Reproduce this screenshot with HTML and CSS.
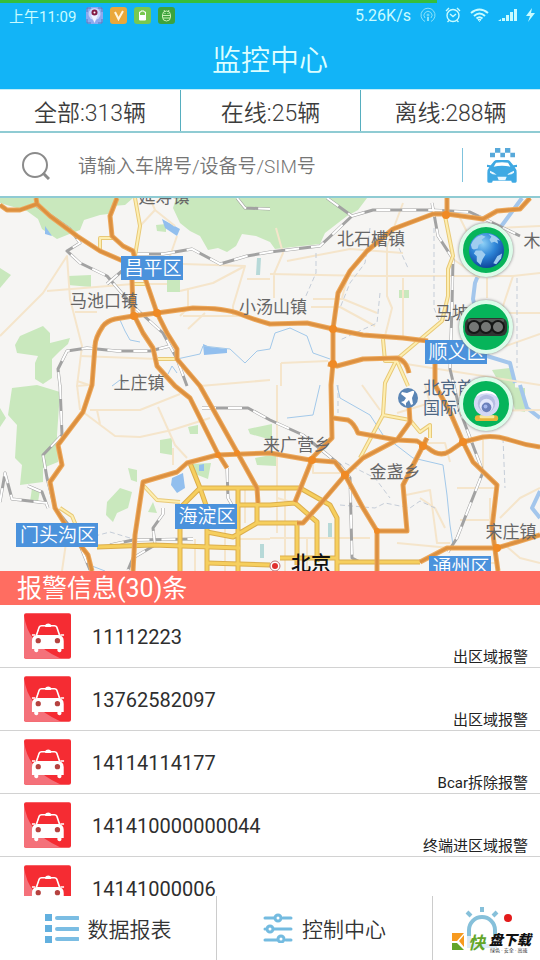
FILE: index.html
```html
<!DOCTYPE html>
<html lang="zh-CN">
<head>
    <meta charset="UTF-8">
    <meta name="viewport" content="width=device-width, initial-scale=1.0">
    <title>监控中心</title>
    <link rel="stylesheet" href="styles.css">
</head>
<body>
    <!-- Shared icons -->
    <svg class="defs" aria-hidden="true">
        <symbol id="taxi" viewBox="0 0 142 138">
            <rect width="142" height="138" rx="6" fill="#f52c33"/>
            <path d="M0 6Q6 50 30 80T112 138H6Q0 138 0 132Z" fill="#f4717a"/>
            <path d="M64 42V36Q66 31 73 31T82 36V42Z" fill="#fff"/>
            <path d="M37 68L46 42Q48 38 53 38H92Q97 38 99 42L108 68" fill="none" stroke="#fff" stroke-width="5"/>
            <path d="M24 84Q24 68 40 66H104Q120 68 120 84V108H113V114Q108 122 101 114V108H43V114Q38 122 31 114V108H24Z" fill="#fff"/>
            <path d="M42 66L49 44H95L102 66Z" fill="#f52c33"/>
            <path d="M24 66H34M110 66H121" stroke="#fff" stroke-width="5"/>
            <circle cx="43" cy="83" r="8" fill="#b5423f"/>
            <circle cx="101" cy="83" r="8" fill="#b5423f"/>
        </symbol>
    </svg>

    <div class="app">
        <!-- Status bar -->
        <div class="status-bar">
            <div class="progress"></div>
            <span class="clock">上午11:09</span>
            <div class="status-left">
                <svg viewBox="0 0 17 17"><rect width="17" height="17" rx="4" fill="#8fa9ef"/><path d="M1 5V1H5M12 1H16V5M1 12V16H5M16 12V16H12" fill="none" stroke="#5478bd"/><circle cx="8.500" cy="7" r="6" fill="#c9d6fb"/><path d="M5 8L8.500 16L12 8Z" fill="#eef3ff"/><circle cx="8.500" cy="5.500" r="3" fill="#841c45"/><circle cx="8.500" cy="5.500" r="1" fill="#fff"/></svg>
                <svg viewBox="0 0 17 17"><rect width="17" height="17" rx="3" fill="#eaa83a"/><path d="M5 5L8.500 12L13 4" fill="none" stroke="#fff4dc" stroke-width="2"/></svg>
                <svg viewBox="0 0 17 17"><rect width="17" height="17" rx="3" fill="#78c850"/><path d="M6 5H7V4H10V5H11.500V13H5.500V5Z" fill="none" stroke="#fff"/><rect x="6" y="8" width="5" height="5" fill="#fff"/></svg>
                <svg viewBox="0 0 17 17"><rect width="17" height="17" rx="3" fill="#3da33c"/><path d="M4.500 8A4 4 0 0 1 12.500 8V10A4 4 0 0 1 4.500 10ZM4 8.500H13M5 11H12M6 3L7 5M11 3L10 5M6.500 6.500H7.500M9.500 6.500H10.500" fill="none" stroke="#c9f2b4"/></svg>
            </div>
            <span class="speed">5.26K/s</span>
            <div class="status-right">
                <svg width="16" height="16" viewBox="0 0 16 16" fill="none" stroke="#8ce3fa"><path d="M5 14.500A7 7 0 1 1 11 14.500"/><path d="M5 11A4 4 0 1 1 11 11"/><circle cx="8" cy="8" r="1"/><path d="M8 10V14" stroke-width="2"/></svg>
                <svg width="16" height="16" viewBox="0 0 16 16" fill="none" stroke="#c8fbff" stroke-width="1.400"><circle cx="8" cy="8.500" r="6"/><path d="M5 7L8 9.500L11 7M1 4L4 1M15 4L12 1M4 13.500L2.500 15M12 13.500L13.500 15"/></svg>
                <svg width="19" height="16" viewBox="0 0 19 16" fill="none" stroke="#c8fbff" stroke-width="2"><path d="M1 6Q9.500 -1 18 6M4 9Q9.500 4 15 9M6.500 11.500Q9.500 9 12.500 11.500"/><path d="M8 12.500H11L9.500 14.500Z" stroke-width="1"/></svg>
                <svg width="19" height="14" viewBox="0 0 19 14" fill="#c8fbff"><path d="M0 13L3 11V13ZM4 10H7V13H4ZM8 7H11V13H8ZM12 4H15V13H12ZM16 1H19V13H16Z"/></svg>
                <svg width="9" height="14" viewBox="0 0 9 14" fill="#c8fbff"><path d="M6 0L0 8H4L2 14L9 5H5Z"/></svg>
            </div>
        </div>

        <header class="title-bar">
            <h1>监控中心</h1>
        </header>

        <!-- Vehicle counts -->
        <div class="counts">
            <button type="button">全部:313辆</button>
            <button type="button">在线:25辆</button>
            <button type="button">离线:288辆</button>
        </div>

        <form class="search">
            <label for="keyword" aria-label="搜索">
                <svg width="28" height="28" viewBox="0 0 28 28" fill="none" stroke="#8b8b8b" stroke-width="2"><circle cx="13" cy="13" r="12"/><path d="M21 21L27 27" stroke-width="3"/></svg>
            </label>
            <input type="text" id="keyword" placeholder="请输入车牌号/设备号/SIM号">
            <button type="button" class="vehicle-btn" aria-label="车辆">
                <svg width="32" height="35" viewBox="0 0 96 105">
                    <path d="M27 0H43V14H27ZM57 0H73V14H57ZM12 14H27V28H12ZM43 14H57V28H43ZM73 14H87V28H73Z" fill="#58a9da"/>
                    <path d="M14 52L24 40Q27 36 33 36H63Q69 36 72 40L82 52L93 50V57L86 58Q92 64 92 74V100Q92 104 88 104H80Q76 104 76 98H20Q20 104 16 104H8Q4 104 4 100V74Q4 64 10 58L3 57V50Z" fill="#3fa9e3"/>
                    <path d="M23 56L30 44Q48 41 66 44L73 56Q48 51 23 56Z" fill="#fff"/>
                    <path d="M12 68Q24 72 32 80Q18 80 12 74ZM84 68Q72 72 64 80Q78 80 84 74ZM34 86H62L58 97H38Z" fill="#e9f7ff"/>
                </svg>
            </button>
        </form>

        <!-- Map -->
        <div class="map">
            <svg class="map-canvas" viewBox="0 0 540 373" role="img" aria-label="北京地图">
                <rect width="540" height="373" fill="#f6f5f3"/>

                <!-- Parks and hills -->
                <g fill="#c9e8bd">
                    <path d="M0 0H133L125 7L112 8L108 16L100 17L84 22L80 32L72 35L57 41L42 31L38 21L27 13L0 5Z"/>
                    <path d="M176 0L173 10L180 25L190 33L200 38L208 52L218 50L227 54L236 48L242 36L256 38L270 44L275 51L320 46L325 35L347 18L358 12L367 0Z"/>
                    <path d="M0 70L11 77L0 90Z"/>
                    <path d="M68 78L91 77V89L68 87Z"/>
                    <path d="M167 78H180V94H167Z"/>
                    <path d="M156 27L166 26V34L157 33Z"/>
                    <path d="M15 147L20 138L43 128L50 135V145L70 140L68 146L60 153L52 161V180L43 186L35 181V165L38 158L17 155Z"/>
                    <path d="M12 190L37 187L60 194L57 237L58 264L43 270V284L20 287L22 267L15 260L17 227L8 217Z"/>
                    <path d="M0 210L6 220L0 229Z"/>
                    <path d="M107 304L120 290L132 294L128 310L117 315L113 324L106 317Z"/>
                    <path d="M128 270L137 272V284L131 282Z"/>
                    <path d="M160 242L172 240V257L160 255Z"/>
                    <path d="M188 229L198 227V236H190Z"/>
                    <path d="M248 231L272 226V242L250 236Z"/>
                    <path d="M255 260L276 256V268L257 267Z"/>
                    <path d="M192 266L211 265L208 281L195 276Z"/>
                    <path d="M148 314L153 304L157 315Z"/>
                    <path d="M32 290L40 292L38 304H30Z"/>
                    <path d="M399 92H409V100H399Z"/>
                    <path d="M492 172L510 170L515 182V200L505 195Z"/>
                    <path d="M508 189L525 190V214L515 212Z"/>
                </g>

                <!-- Water -->
                <g fill="#92bfee">
                    <path d="M162 21L180 31L177 38L165 30Z"/>
                    <path d="M172 280L183 275L185 290L177 295L171 287Z"/>
                    <path d="M203 146L210 149L227 151V155L204 157Z"/>
                    <path d="M45 28L52 38L45 36Z"/>
                    <path d="M199 267L204 266V273H199Z"/>
                </g>
                <g class="river">
                    <path d="M177 161L200 156L203 148L230 151L245 165L257 153L270 151L275 135L290 130L307 138L313 155L330 161"/>
                    <path d="M337 187L340 200L370 217L383 237L413 260L443 267L447 297L450 327L453 347"/>
                    <path d="M287 220L313 217L320 187M120 122L125 133L130 142L140 144"/>
                    <path d="M112 188L120 182L125 185M168 176L172 168L177 175M85 351L92 368L105 373"/>
                    <path d="M259 60L258 77M262 346V360M330 325V340" stroke="#b7d9d8" stroke-width="4"/>
                    <path class="wide" d="M522 0L500 30L483 65L475 85L473 101L487 158L510 165L515 185M520 187L527 210L540 220M540 293L532 310L540 320"/>
                </g>

                <!-- Local roads -->
                <g class="road local">
                    <path d="M0 138L23 115L43 95L67 58L70 101L82 148L77 188L88 187"/>
                    <path d="M47 93L133 86H167M183 66L245 68L233 108V118M180 93L213 85L245 68M247 81H270M188 90V110L180 118"/>
                    <path d="M75 114H97M80 158L158 161M188 131L205 115M183 118H240M200 188L270 182M77 183L92 188"/>
                    <path d="M140 28L155 12L150 0M140 28L136 56M177 38L170 58M155 12L175 28"/>
                    <path d="M270 76L370 78H513L540 75M276 30L283 55L274 76V100M287 63L350 51L403 55"/>
                    <path d="M403 5L387 48V98L392 110L385 138M313 101H343L377 115M311 109H340L375 128M350 70L342 100"/>
                    <path d="M455 115H540M487 80V100M513 78L503 108L510 125M470 145L500 150L540 136M281 165L328 163M281 165V188M387 163L540 187"/>
                    <path d="M403 80V138M453 61L480 80M460 20L470 40M500 30L540 28"/>
                    <path d="M90 212H140L180 196M83 214L115 238L140 239L172 232L210 220M158 209L175 247L187 260M173 250V267M77 187L80 212M97 212L100 226"/>
                    <path d="M277 187V335M270 340H370M307 340V373M277 300L295 305M313 262V275H340"/>
                    <path d="M362 187L380 212M406 297L430 292L437 345H450M420 300L435 310L445 330M457 290H495M460 322H492M483 239V270M490 300V330"/>
                    <path d="M500 320L520 300L540 290M505 347L520 360L540 365M415 245H445L450 264M397 215L430 205L425 187M460 213L540 212M62 373L66 345"/>
                    <path d="M195 341V373M225 311V373M240 341H270M245 290V325M285 290V373M397 345L450 350M458 365H498"/>
                </g>

                <!-- Dashed boundaries -->
                <g class="boundary">
                    <path d="M316 55V75L305 100M370 30L365 65L350 85L340 110M434 30V110L440 125M399 50L408 70M380 95L377 125L340 142M517 80V170"/>
                    <path d="M340 307L375 310L385 305L410 310L420 303L435 310M345 265L375 280L390 300M338 187V215M130 340L110 334L95 338M503 240L505 290"/>
                </g>

                <!-- Railways -->
                <g class="rail">
                    <path d="M37 8L70 31L80 45L67 53L80 65L107 78L133 108L163 135L177 161L187 188"/>
                    <path d="M107 86L122 73L128 63M135 56H163L192 51L220 66L247 58L270 54L320 48L352 18L373 12H430L470 14L520 38M327 0L352 18M237 0L245 10L270 11"/>
                    <path d="M60 188L58 171L67 153L87 150L117 153H150L170 148M60 187L62 237L43 257L47 280L55 310L75 335L90 372"/>
                    <path d="M0 304L5 275L12 301L47 305M28 288L42 294L48 310"/>
                    <path d="M202 210H248L270 222L303 237L340 267L350 280L352 360L360 364"/>
                    <path d="M227 270L228 300L232 307M163 310V316L153 330L155 347L133 360L128 372M110 347L133 342L193 341"/>
                    <path d="M432 5L438 38L453 61L452 108L450 171L460 213L483 274L457 340L448 354"/>
                </g>
                <g class="rail-gap">
                    <path d="M37 8L70 31L80 45L67 53L80 65L107 78L133 108L163 135L177 161L187 188"/>
                    <path d="M107 86L122 73L128 63M135 56H163L192 51L220 66L247 58L270 54L320 48L352 18L373 12H430L470 14L520 38M327 0L352 18M237 0L245 10L270 11"/>
                    <path d="M60 188L58 171L67 153L87 150L117 153H150L170 148M60 187L62 237L43 257L47 280L55 310L75 335L90 372"/>
                    <path d="M0 304L5 275L12 301L47 305M28 288L42 294L48 310"/>
                    <path d="M202 210H248L270 222L303 237L340 267L350 280L352 360L360 364"/>
                    <path d="M227 270L228 300L232 307M163 310V316L153 330L155 347L133 360L128 372M110 347L133 342L193 341"/>
                    <path d="M432 5L438 38L453 61L452 108L450 171L460 213L483 274L457 340L448 354"/>
                </g>

                <!-- Secondary roads -->
                <g class="road second-case">
                    <path d="M135 0L140 28L135 58M100 53V40H115M158 161H177M133 86H147M445 18L453 58L448 71V98L442 123L397 161L385 185L383 217L360 260M383 217L410 222L420 234L430 227V240M383 141L385 163H397L408 188M143 287L157 302L180 304M60 310L72 318L77 330"/>
                </g>
                <g class="road second-fill">
                    <path d="M135 0L140 28L135 58M100 53V40H115M158 161H177M133 86H147M445 18L453 58L448 71V98L442 123L397 161L385 185L383 217L360 260M383 217L410 222L420 234L430 227V240M383 141L385 163H397L408 188M143 287L157 302L180 304M60 310L72 318L77 330"/>
                </g>
                <g class="road ring-case">
                    <path d="M97 349L153 347L240 350M207 365L270 367M257 305V325M337 364H387L420 364M280 360H337"/>
                    <path d="M190 265L200 290H300L330 307L337 320V373M238 290V373M200 290L180 310V373M200 290L207 310V373M238 307H270L295 305L317 324V364M207 334L233 339L257 325H297V367"/>
                </g>
                <g class="road ring-fill">
                    <path d="M97 349L153 347L240 350M207 365L270 367M257 305V325M337 364H387L420 364M280 360H337"/>
                    <path d="M190 265L200 290H300L330 307L337 320V373M238 290V373M200 290L180 310V373M200 290L207 310V373M238 307H270L295 305L317 324V364M207 334L233 339L257 325H297V367"/>
                </g>

                <!-- Expressways -->
                <g class="road main-case">
                    <path d="M0 7L7 12H20L37 6L50 18L77 38L100 53L123 63L132 81L133 115L143 135L153 150L157 168L175 188L190 200L200 220L217 254L227 270M37 6L36 0"/>
                    <path d="M117 0L110 18L112 38L123 48L133 53L135 61L145 80L157 115L167 135L177 151V161L200 188L237 254L257 290L258 305"/>
                    <path d="M428 143L403 140L363 137L333 131L307 125L270 126Q255 122 240 116T193 110L157 115L133 118L115 121Q107 123 103 128Q95 140 95 148L92 187L83 214L58 247L62 267L50 284L55 310L70 334L88 357L92 373"/>
                    <path d="M530 0L520 11L497 13L483 21L447 16H433L393 31L367 53L350 73L338 95L333 131V165L331 187L332 240L313 259L295 304M447 0V18"/>
                    <path d="M328 166L337 168L363 161L397 160Q406 162 409 175M409 207L410 224L397 242L363 260L345 277L322 304L303 325H297"/>
                    <path d="M333 220L348 222Q354 225 358 235L397 242L417 243L428 250Q440 260 450 253L463 244L483 239Q495 237 510 242T540 249"/>
                    <path d="M435 166V187L450 214L463 244L473 264L497 287L492 330L498 373"/>
                    <path d="M133 373L135 337L143 284L177 274L187 265L217 257L270 255L310 262L335 264L345 277L363 310L377 333V373M377 333H407L403 287L427 240"/>
                    <path d="M420 364L447 350H497L517 344L540 337"/>
                </g>
                <g class="road main-fill">
                    <path d="M0 7L7 12H20L37 6L50 18L77 38L100 53L123 63L132 81L133 115L143 135L153 150L157 168L175 188L190 200L200 220L217 254L227 270M37 6L36 0"/>
                    <path d="M117 0L110 18L112 38L123 48L133 53L135 61L145 80L157 115L167 135L177 151V161L200 188L237 254L257 290L258 305"/>
                    <path d="M428 143L403 140L363 137L333 131L307 125L270 126Q255 122 240 116T193 110L157 115L133 118L115 121Q107 123 103 128Q95 140 95 148L92 187L83 214L58 247L62 267L50 284L55 310L70 334L88 357L92 373"/>
                    <path d="M530 0L520 11L497 13L483 21L447 16H433L393 31L367 53L350 73L338 95L333 131V165L331 187L332 240L313 259L295 304M447 0V18"/>
                    <path d="M328 166L337 168L363 161L397 160Q406 162 409 175M409 207L410 224L397 242L363 260L345 277L322 304L303 325H297"/>
                    <path d="M333 220L348 222Q354 225 358 235L397 242L417 243L428 250Q440 260 450 253L463 244L483 239Q495 237 510 242T540 249"/>
                    <path d="M435 166V187L450 214L463 244L473 264L497 287L492 330L498 373"/>
                    <path d="M133 373L135 337L143 284L177 274L187 265L217 257L270 255L310 262L335 264L345 277L363 310L377 333V373M377 333H407L403 287L427 240"/>
                    <path d="M420 364L447 350H497L517 344L540 337"/>
                </g>
                <g fill="#f08a24">
                    <circle cx="157" cy="115" r="4"/><circle cx="134" cy="118" r="4"/><circle cx="333" cy="131" r="4"/><circle cx="333" cy="166" r="4"/>
                    <circle cx="446" cy="17" r="4"/><circle cx="345" cy="277" r="4"/><circle cx="312" cy="262" r="4"/><circle cx="463" cy="244" r="4"/>
                    <circle cx="423" cy="248" r="4"/><circle cx="497" cy="350" r="4"/><circle cx="377" cy="333" r="3"/><circle cx="218" cy="257" r="3"/><circle cx="237" cy="255" r="3"/>
                </g>

                <!-- Towns -->
                <g class="town">
                    <text x="164" y="5">延寿镇</text>
                    <text x="371" y="47">北石槽镇</text>
                    <text x="104" y="109">马池口镇</text>
                    <text x="273" y="115">小汤山镇</text>
                    <text x="139" y="191">上庄镇</text>
                    <text x="452" y="121">马坡</text>
                    <text x="532" y="49">木</text>
                    <text x="297" y="253">来广营乡</text>
                    <text x="395" y="280">金盏乡</text>
                    <text x="511" y="340">宋庄镇</text>
                </g>
                <g class="airport">
                    <circle cx="408" cy="200" r="10" fill="#5a85b5"/>
                    <path d="M402 194L407 195L412 193Q415 192 414 195L412 200L413 206L411 207L409 202L406 205V208L404 206L401 204L404 203L406 200L401 196Z" fill="#fff"/>
                    <text x="423" y="196">北京首都</text>
                    <text x="423" y="216">国际机场</text>
                </g>

                <!-- Districts -->
                <g class="district-box">
                    <rect x="121" y="58" width="62" height="24"/>
                    <rect x="425" y="142" width="62" height="24"/>
                    <rect x="175" y="306" width="62" height="25"/>
                    <rect x="16" y="325" width="82" height="24"/>
                    <rect x="429" y="358" width="62" height="25"/>
                </g>
                <g class="district">
                    <text x="153" y="77">昌平区</text>
                    <text x="457" y="161">顺义区</text>
                    <text x="207" y="325">海淀区</text>
                    <text x="58" y="344">门头沟区</text>
                    <text x="461" y="376">通州区</text>
                </g>
                <circle cx="275" cy="368" r="5" fill="#fff" stroke="#b77"/>
                <circle cx="275" cy="368" r="3" fill="#e02f2f"/>
                <text class="capital" x="311" y="373">北京</text>
            </svg>

            <div class="map-tools">
                <button type="button" aria-label="卫星地图">
                    <svg viewBox="0 0 38 38">
                        <defs>
                            <radialGradient id="sea" cx=".4" cy=".3" r=".75"><stop offset="0" stop-color="#8dd0f6"/><stop offset=".5" stop-color="#2c83d6"/><stop offset="1" stop-color="#0b3c93"/></radialGradient>
                        </defs>
                        <circle cx="19" cy="19" r="18" fill="url(#sea)"/>
                        <g fill="#9fcdf0">
                            <path d="M3 13Q6 5 14 3L18 5L14 8L16 11L11 13L10 17L6 18L4 17Z"/>
                            <path d="M21 2Q29 3 33 9L30 8L31 12L27 10L24 11L22 8L24 5Z"/>
                            <path d="M8 19L14 19L18 23L15 28L13 34L9 30L9 25L6 22Z"/>
                            <path d="M30 25L35 22L34 27L29 33L26 32Z"/>
                        </g>
                    </svg>
                </button>
                <button type="button" aria-label="路况">
                    <svg class="traffic" viewBox="0 0 44 20">
                        <rect x="1" y="1" width="42" height="18" rx="6" fill="#303432"/>
                        <rect x="4" y="2" width="36" height="3" rx="1" fill="#555a57"/>
                        <g fill="#747775" stroke="#151716" stroke-width="2"><circle cx="10" cy="10" r="6"/><circle cx="22" cy="10" r="6"/><circle cx="34" cy="10" r="6"/></g>
                    </svg>
                </button>
                <button type="button" aria-label="街景">
                    <svg viewBox="0 0 38 38">
                        <rect x="7" y="30" width="24" height="6" rx="3" fill="#e5b43c"/>
                        <rect x="12" y="30" width="15" height="3" rx="1" fill="#f9e79a"/>
                        <circle cx="19" cy="18" r="13" fill="#d3d8f5"/>
                        <path d="M8 11A13 13 0 0 1 30 11Q19 4 8 11Z" fill="#fff"/>
                        <circle cx="19" cy="18" r="9" fill="#b4bde2"/>
                        <circle cx="19" cy="20" r="7" fill="#e4e8fb"/>
                        <circle cx="19" cy="22" r="5" fill="#6b80bb"/>
                        <circle cx="18" cy="21" r="2" fill="#a6b8ee"/>
                    </svg>
                </button>
            </div>
        </div>

        <!-- Alarms -->
        <h2 class="alarm-title">报警信息(30)条</h2>
        <ul class="alarm-list">
            <li>
                <svg class="taxi"><use href="#taxi"/></svg>
                <span class="device">11112223</span>
                <span class="reason">出区域报警</span>
            </li>
            <li>
                <svg class="taxi"><use href="#taxi"/></svg>
                <span class="device">13762582097</span>
                <span class="reason">出区域报警</span>
            </li>
            <li>
                <svg class="taxi"><use href="#taxi"/></svg>
                <span class="device">14114114177</span>
                <span class="reason">Bcar拆除报警</span>
            </li>
            <li>
                <svg class="taxi"><use href="#taxi"/></svg>
                <span class="device">141410000000044</span>
                <span class="reason">终端进区域报警</span>
            </li>
            <li>
                <svg class="taxi"><use href="#taxi"/></svg>
                <span class="device">14141000006</span>
            </li>
        </ul>

        <!-- Bottom menu -->
        <nav class="bottom-nav">
            <a href="#report">
                <svg width="34" height="30" viewBox="0 0 34 30"><path d="M0 1H7V8H0ZM0 12H7V19H0ZM0 23H7V30H0Z" fill="#62b0df"/><path d="M12 5H33M12 16H33M12 26H33" stroke="#7bbde3" stroke-width="4" stroke-linecap="round"/></svg>
                <span>数据报表</span>
            </a>
            <a href="#control">
                <svg width="30" height="30" viewBox="0 0 30 30" fill="none" stroke="#74bbe0" stroke-width="3" stroke-linecap="round"><path d="M2 5H11M20 5H28M2 16H2M11 16H28M2 27H14M23 27H28"/><g fill="#fff"><circle cx="15" cy="5" r="3"/><circle cx="7" cy="16" r="3"/><circle cx="18" cy="26" r="3"/></g></svg>
                <span>控制中心</span>
            </a>
            <a href="#alarm" aria-label="报警">
                <svg width="48" height="44" viewBox="0 0 48 44" fill="none" stroke="#86c0da" stroke-width="4"><path d="M4 30V24A13 13 0 0 1 30 24V30"/><path d="M2 6L6 10M17 1V6M32 6L28 10"/><path d="M4 30V40H30V30" stroke="#dceaf6"/><circle cx="43" cy="12" r="4" fill="#e31b1b" stroke="none"/></svg>
            </a>
            <div class="badge">
                <svg viewBox="0 0 86 22">
                    <path d="M1 1H13L6 9H1ZM13 3V15L8 9Z" fill="#f79a1f"/>
                    <path d="M1 11H6L13 18H1Z" fill="#63a52a"/>
                    <text class="brand" x="17" y="17">快</text>
                    <text class="brand-rest" x="38" y="13">盘下载</text>
                    <text class="slogan" x="39" y="20">绿色 · 安全 · 高速</text>
                </svg>
            </div>
        </nav>
    </div>
</body>
</html>
```
FILE: styles.css
```css
* {
    box-sizing: border-box;
}
body {
    margin: 0;
    font-family: Roboto, "Noto Sans CJK SC", sans-serif;
    color: #333;
    background: #fff;
}
button, input {
    font-family: inherit;
    border: none;
    background: none;
    padding: 0;
}
h1, h2, ul {
    margin: 0;
    padding: 0;
    font-weight: 350;
}
.defs {
    display: none;
}
.app {
    display: flex;
    flex-direction: column;
    height: 100vh;
}
.app > * {
    flex-shrink: 0;
}

/* Status bar */
.status-bar {
    position: relative;
    display: flex;
    align-items: center;
    height: 30px;
    padding: 0 5px 0 9px;
    font-size: 16px;
    color: #c8fbff;
    background: #12b4f7;
}
.progress {
    position: absolute;
    top: 0;
    left: 0;
    width: 81%;
    height: 3px;
    background: #36be3c;
}
.clock {
    font-size: 15px;
}
.status-left {
    display: flex;
    gap: 7px;
    margin-left: 10px;
}
.status-left svg {
    width: 17px;
    height: 17px;
}
.speed {
    margin-left: auto;
}
.status-right {
    display: flex;
    align-items: center;
    gap: 9px;
    margin-left: 9px;
}

.title-bar {
    display: flex;
    align-items: center;
    justify-content: center;
    height: 59px;
    padding-top: 2px;
    background: #12b4f7;
}
.title-bar h1 {
    font-size: 29px;
    line-height: 40px;
    color: #dcfeff;
}

/* Vehicle counts */
.counts {
    display: grid;
    grid-template-columns: repeat(3, 1fr);
    height: 44px;
    border-top: 1px solid #c4eef8;
    border-bottom: 2px solid #8fcbd3;
}
.counts button {
    font-size: 23px;
    font-weight: 350;
    color: #3c3c3c;
}
.counts button + button {
    border-left: 1px solid #56aebf;
}

/* Search */
.search {
    display: flex;
    align-items: center;
    height: 65px;
    padding: 0 22px;
    border-bottom: 2px solid #8fcbd3;
}
.search label {
    display: flex;
    padding-top: 3px;
}
.search input {
    flex: 1;
    min-width: 0;
    margin-left: 28px;
    padding-top: 3px;
    font-size: 19px;
    font-weight: 350;
    outline: none;
}
.search input::placeholder {
    color: #757575;
}
.vehicle-btn {
    display: flex;
    height: 34px;
    padding-left: 23px;
    border-left: 1px solid #7fc3dd;
}

/* Map */
.map {
    position: relative;
}
.map-canvas {
    display: block;
    width: 100%;
    height: auto;
}
.road, .river, .rail, .rail-gap, .boundary {
    fill: none;
    stroke-linejoin: round;
}
.river {
    stroke: #a3c9ea;
    stroke-width: 1;
}
.river .wide {
    stroke: #a3c6ec;
    stroke-width: 4;
}
.local {
    stroke: #f5e5cb;
    stroke-width: 2;
}
.boundary {
    stroke: #c5cdd8;
    stroke-width: 1;
    stroke-dasharray: 5 3;
}
.rail {
    stroke: #a2a2a2;
    stroke-width: 3;
}
.rail-gap {
    stroke: #fff;
    stroke-width: 2;
    stroke-dasharray: 14 12;
}
.second-case {
    stroke: #e8c978;
    stroke-width: 4;
}
.second-fill {
    stroke: #fdeeb0;
    stroke-width: 2;
}
.ring-case {
    stroke: #dcae4c;
    stroke-width: 5;
}
.ring-fill {
    stroke: #f6cf5e;
    stroke-width: 3;
}
.main-case {
    stroke: #eda95c;
    stroke-width: 5;
}
.main-fill {
    stroke: #dc9040;
    stroke-width: 3;
}
.town text {
    font-size: 17px;
    fill: #666;
    text-anchor: middle;
}
.airport text {
    font-size: 17px;
    fill: #4e6784;
}
.district-box {
    fill: #4b92dc;
}
.district text {
    font-size: 19px;
    font-weight: 350;
    fill: #fff;
    text-anchor: middle;
}
.capital {
    font-size: 20px;
    font-weight: 500;
    fill: #111;
    text-anchor: middle;
}
.map-tools {
    position: absolute;
    top: 25px;
    right: 27px;
    display: flex;
    flex-direction: column;
    gap: 23px;
}
.map-tools button {
    display: flex;
    align-items: center;
    justify-content: center;
    width: 54px;
    height: 54px;
    border: 4px solid #dcfbe9;
    border-radius: 50%;
    background: #06b45a;
    box-shadow: 0 0 3px #777;
}
.map-tools svg {
    flex-shrink: 0;
    width: 37px;
    height: 37px;
}
.map-tools .traffic {
    width: 44px;
    height: 20px;
}

/* Alarms */
.alarm-title {
    height: 34px;
    padding: 2px 0 0 17px;
    font-size: 25px;
    font-weight: 400;
    line-height: 32px;
    color: #fff;
    background: #ff6d61;
}
.app .alarm-list {
    flex: 1 1 0;
    min-height: 0;
    overflow: hidden;
    list-style: none;
    font-weight: 400;
}
.alarm-list li {
    display: flex;
    align-items: center;
    height: 63px;
    padding: 0 12px 0 24px;
    border-bottom: 1px solid #d2d2d2;
}
.taxi {
    width: 47px;
    height: 46px;
}
.device {
    margin-left: 21px;
    padding-top: 2px;
    font-size: 20px;
    color: #2e2e2e;
}
.reason {
    align-self: flex-end;
    margin-left: auto;
    font-size: 15px;
    line-height: 20px;
    color: #222;
}

/* Bottom menu */
.bottom-nav {
    position: relative;
    display: flex;
    height: 64px;
    overflow: hidden;
}
.bottom-nav a {
    display: flex;
    flex: 0 0 40%;
    align-items: center;
    justify-content: center;
    gap: 9px;
    font-size: 21px;
    font-weight: 350;
    color: #333;
    text-decoration: none;
}
.bottom-nav a + a {
    border-left: 1px solid #ccc;
}
.bottom-nav a:last-of-type {
    justify-content: flex-start;
    padding-left: 32px;
}
.badge {
    position: absolute;
    right: 3px;
    bottom: 6px;
    width: 86px;
}
.badge svg {
    display: block;
}
.brand {
    font-size: 17px;
    font-style: italic;
    font-weight: 700;
    fill: #63a52a;
}
.brand-rest {
    font-size: 14px;
    font-style: italic;
    font-weight: 900;
    fill: #111;
}
.slogan {
    font-size: 5px;
    fill: #333;
}
```
